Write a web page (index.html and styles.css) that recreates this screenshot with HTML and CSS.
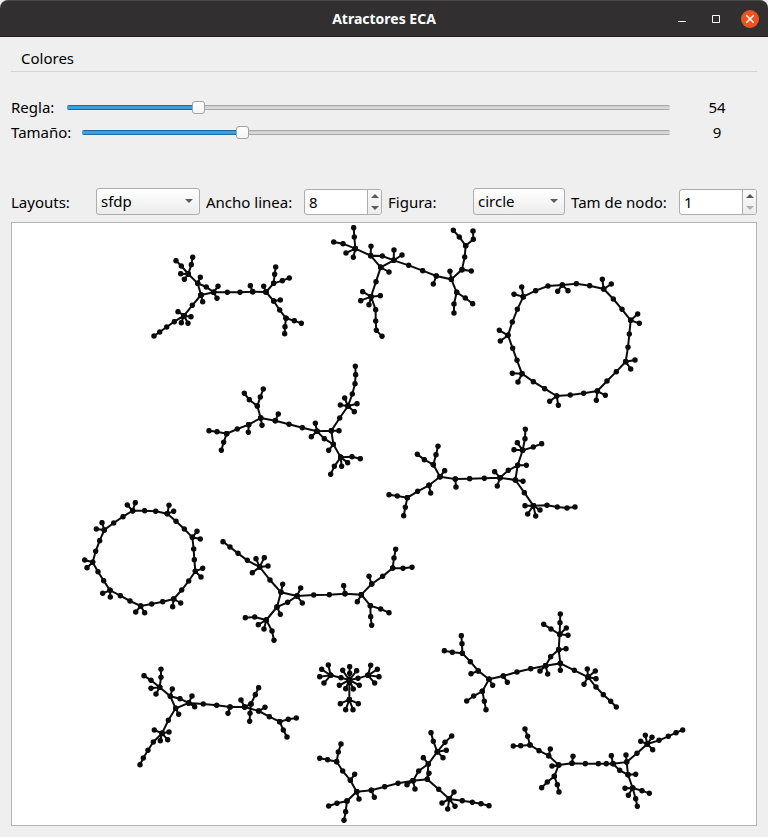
FILE: index.html
```html
<!DOCTYPE html>
<html lang="es">
<head>
<meta charset="utf-8">
<meta name="viewport" content="width=device-width, initial-scale=1">
<title>Atractores ECA</title>
<link rel="stylesheet" href="styles.css">
</head>
<body>
<header class="titlebar">
  <h1 class="title">Atractores ECA</h1>
  <div class="window-buttons">
    <button class="win-btn" type="button" aria-label="Minimizar"><svg width="18" height="18" viewBox="0 0 18 18"><path d="M5 11.5h8" stroke="#fff" fill="none"/></svg></button>
    <button class="win-btn" type="button" aria-label="Maximizar"><svg width="18" height="18" viewBox="0 0 18 18"><path d="M5.5 5.5h7v7h-7z" stroke="#fff" fill="none"/></svg></button>
    <button class="win-btn win-close" type="button" aria-label="Cerrar"><svg width="18" height="18" viewBox="0 0 18 18"><path d="M5.3 5.3l7.4 7.4M12.7 5.3l-7.4 7.4" stroke="#fff" stroke-width="1.5" fill="none"/></svg></button>
  </div>
</header>
<main class="content">
  <nav class="menubar"><button class="menu-item" type="button">Colores</button></nav>

  <section class="sliders">
    <div class="slider-row">
      <label class="slider-label" for="regla">Regla:</label>
      <input class="slider" id="regla" type="range" min="0" max="255" value="54" style="--fill:21.2%">
      <output class="slider-value" for="regla">54</output>
    </div>
    <div class="slider-row">
      <label class="slider-label" for="tamano">Tamaño:</label>
      <input class="slider" id="tamano" type="range" min="5" max="20" value="9" style="--fill:26.7%">
      <output class="slider-value" for="tamano">9</output>
    </div>
  </section>

  <section class="options">
    <label for="layout">Layouts:</label>
    <div class="combo"><select id="layout"><option>sfdp</option></select></div>
    <label for="ancho">Ancho linea:</label>
    <div class="spin">
      <input id="ancho" type="number" min="1" value="8">
      <div class="spin-buttons">
        <button class="up" type="button" aria-label="Aumentar ancho"></button>
        <button class="down" type="button" aria-label="Reducir ancho"></button>
      </div>
    </div>
    <label for="figura">Figura:</label>
    <div class="combo"><select id="figura"><option>circle</option></select></div>
    <label for="nodo">Tam de nodo:</label>
    <div class="spin">
      <input id="nodo" type="number" min="1" value="1">
      <div class="spin-buttons">
        <button class="up" type="button" aria-label="Aumentar nodo"></button>
        <button class="down" type="button" aria-label="Reducir nodo" disabled></button>
      </div>
    </div>
  </section>

  <section class="canvas">
    <svg class="graph" viewBox="12 223 744 602" role="img" aria-label="Atractores">
      <defs>
        <marker id="node" markerUnits="userSpaceOnUse" markerWidth="18" markerHeight="18" refX="9" refY="9"><circle cx="9" cy="9" r="8.2" fill="#0b0b0b"/></marker>
      </defs>
      <g transform="translate(140 225) scale(.333333)"><path d="M183 210L173 175L199 186L221 202L183 210L188 230M181 157L173 175L145 147L124 123L108 107M145 147L154 119L158 97M122 146L145 147L133 163M183 210L157 241L132 272L103 290L80 306L59 321L42 333M114 260L132 272L153 275M124 293L132 272L144 295M234 184L221 202L231 220M221 202L262 202L300 202L338 200L378 201L371 184M338 200L331 182M378 201L401 175L404 148L407 126M401 175L427 167L448 159M378 201L401 228L421 225M401 228L419 255L438 280L435 305L434 326M438 280L463 287L484 295"/></g>
      <g transform="translate(320 220) scale(.333333)"><path d="M182 142L152 107L187 108L221 121L182 142L207 156M153 79L152 107L106 86L103 51L101 23M106 86L69 71L41 66M78 99L106 86L100 112M182 142L168 185L153 230L167 269L167 303L169 331L186 349M128 215L153 230L181 227M122 242L153 230L147 254M222 90L221 121L246 105M221 121L266 136L308 152L349 168L394 178L390 154M349 168L340 192M394 178L426 149L454 153M426 149L434 111L437 77L418 51L400 31M437 77L460 58L459 33M394 178L410 217L402 252L402 279M410 217L436 234L458 251"/></g>
      <g transform="translate(490 270) scale(.333333)"><path d="M100 80L137 62L174 48L217 45L259 41L299 47L341 57L370 87L396 118L422 151L418 192L414 232L407 275L379 305L351 333L322 363L281 370L241 375L200 378L164 356L130 335L96 311L81 271L68 235L54 196L67 156L82 118ZM95 51L100 80L72 73M203 64L217 45L234 62M337 28L341 57L364 42M443 132L422 151L448 160M435 270L407 275L422 297M346 376L322 363L319 391M179 394L200 378L205 406M67 310L96 311L84 336M28 181L54 196L31 213"/></g>
      <g transform="translate(200 355) scale(.333333)"><path d="M186 211L182 189L172 153L148 134L133 115M172 153L181 126L190 102M182 189L146 209L145 232M146 209L112 222L80 236L51 230L27 227M80 236L71 262L64 286M182 189L226 197L267 208L307 218L351 229L394 227L400 268L373 251L351 229M226 197L235 177M346 205L351 229L334 245M417 227L394 227L419 189L444 153L457 117L465 86L467 59L466 34M434 129L444 153L421 150M471 146L444 153L463 170M386 286L400 268L422 307L456 305L481 311M425 334L422 307L443 323M422 307L403 334L392 358"/></g>
      <g transform="translate(380 420) scale(.333333)"><path d="M194 152L180 170L160 134L133 119L112 103M160 134L168 104L174 79M180 170L147 196L152 219M147 196L113 214L82 233L52 228L27 224M82 233L76 262L71 287M180 170L226 177L228 201M226 177L269 176L313 175L360 173L406 180L413 136L385 151L360 173M344 155L360 173L352 198M439 136L413 136L428 91L435 56L436 28M428 91L460 81L485 71M402 89L428 91L412 68M429 184L406 180L433 218L460 257L501 256L532 261L561 264L585 261M435 257L460 257L443 282M467 288L460 257L480 270"/></g>
      <g transform="translate(75 490) scale(.333333)"><path d="M173 62L209 62L242 64L277 71L303 94L328 117L352 142L356 177L358 209L361 244L341 273L320 300L296 327L263 335L230 342L197 348L165 333L136 317L105 301L86 272L69 245L53 217L62 184L74 152L88 120L116 99L144 80ZM157 45L173 62L181 38M282 46L277 71L296 64M366 124L352 142L376 147M383 235L361 244L378 261M317 339L296 327L293 350M182 366L197 348L209 368M83 310L105 301L106 321M29 210L53 217L36 233M64 117L88 120L81 98"/></g>
      <g transform="translate(210 530) scale(.333333)"><path d="M218 163L213 187L201 231L233 217L261 198L213 187L180 150L149 111L112 91L84 70L60 51L39 35M138 86L149 111L163 83M174 108L149 111L127 128M211 253L201 231L169 270L134 261L106 263M169 270L186 303L192 331M145 284L169 270L162 297M272 174L261 198L277 219M261 198L311 195L358 194L405 191L454 194L442 215M405 191L401 167M454 194L485 162L477 139M485 162L518 139L548 114L552 84L557 58M548 114L579 115L606 112M454 194L481 227L512 237L537 248M481 227L482 260L485 286"/></g>
      <g transform="translate(130 650) scale(.333333)">
        <path d="M127 117L121 139L137 175L176 159L150 146L121 139L89 112L63 91L42 77M89 112L93 82L93 58M63 115L89 112L78 132M146 193L137 175L115 211L96 250L70 276L54 301L40 324L30 344M73 240L96 250L117 246M91 272L96 250L113 269M186 138L176 159L194 170M176 159L220 162L260 166L300 171L344 171L333 150M300 171L294 190M344 171L363 162L376 134L386 113M363 162L360 190L359 214M344 171L386 183L405 172M386 183L418 200L449 215L475 208L499 204M449 215L460 240L471 261"/>
        <path d="M659 50L659 70L658 90L658 149M638 61L658 90L680 62M628 106L658 90L688 106M647 116L658 90L670 117M602 76L633 83L658 90L684 85L714 76M575 58L602 76L595 45M569 80L602 76L582 99M722 46L714 76L742 58M747 80L714 76L734 99M631 161L658 149L685 161M647 179L658 149L669 179"/>
      </g>
      <g transform="translate(430 605) scale(.333333)"><path d="M188 241L177 223L157 259L131 273L110 288M157 259L163 289L168 314M177 223L145 198L123 206M145 198L121 170L97 145L67 142L43 137M97 145L96 116L94 92M177 223L220 213L232 232M220 213L261 201L302 191L347 182L391 175L386 134L362 155L347 182M330 198L347 182L353 207M408 131L386 134L389 88L390 53L391 27M389 88L363 72L341 58M409 69L389 88L414 91M391 196L391 175L433 196L474 216L498 246L520 269L542 289L559 306M472 192L474 216L496 198M498 221L474 216L462 238"/></g>
      <g transform="translate(310 720) scale(.333333)">
        <path d="M147 237L140 215L111 243L81 250L56 258M111 243L107 275L102 301M140 215L121 181L134 163M121 181L98 153L80 125L53 119L29 115M80 125L85 96L93 72M140 215L184 211L193 232M184 211L224 200L264 190L309 182L352 178L355 132L326 153L309 182M291 194L309 182L315 207M340 113L355 132L382 95L370 64L363 38M382 95L405 67L425 48M409 91L382 95L399 113M357 160L352 178L386 208L418 237L457 242L487 247L513 251L537 257M432 216L418 237L396 249M413 267L418 237L435 259"/>
        <path d="M726 138L746 135L716 107L721 87M716 107L687 92L660 75L632 77L610 78M660 75L653 49L645 27M746 135L733 169L712 186L695 203M733 169L742 194L747 216M746 135L786 130L789 109M786 130L826 131L865 131L889 131L909 131L950 126L954 164L929 151L909 131L904 107M948 105L950 126L981 100L1012 72L1047 61L1075 49L1098 38L1118 30M992 64L1012 72L1006 46M1026 52L1012 72L1028 89M977 163L954 164L968 204L996 212L1018 220M968 204L977 236L982 259M945 205L968 204L955 226"/>
      </g>
    </svg>
  </section>
</main>
</body>
</html>
```
FILE: styles.css
```css
* {
  box-sizing: border-box;
}

body {
  margin: 0;
  background: #efefef;
  color: #000;
  font: 15px/20px "Noto Sans", "Open Sans", sans-serif;
}

button,
input,
select {
  margin: 0;
  padding: 0;
  border: 0;
  color: inherit;
  font: inherit;
}

.titlebar {
  display: grid;
  grid-template-columns: 1fr auto 1fr;
  align-items: center;
  height: 37px;
  padding: 0 9px;
  border-top: 1px solid #4b494a;
  border-bottom: 1px solid #1c1b1b;
  border-radius: 8px 8px 0 0;
  background: #322f30;
}

.title {
  grid-column: 2;
  margin: 0;
  color: #fff;
  font-size: 14px;
  font-weight: 700;
}

.window-buttons {
  display: flex;
  justify-content: flex-end;
  gap: 16px;
}

.win-btn {
  width: 18px;
  height: 18px;
  border-radius: 50%;
  background: none;
}

.win-btn svg {
  display: block;
}

.win-close {
  background: #e95420;
}

.content {
  padding: 10px 11px 11px;
}

.menubar {
  display: flex;
  padding: 0 10px;
  border-bottom: 1px solid #d3d3d3;
}

.menu-item {
  height: 24px;
  padding-bottom: 2px;
  background: none;
}

.sliders {
  margin-top: 23px;
}

.slider-row {
  display: flex;
  align-items: center;
  height: 25px;
}

.slider-label,
.slider-value {
  padding-bottom: 2px;
}

.slider-label {
  min-width: 45px;
  margin-right: 11px;
}

.slider {
  flex: 1;
  min-width: 0;
  height: 13px;
  appearance: none;
  background: none;
}

.slider::-webkit-slider-runnable-track {
  height: 5px;
  border-radius: 2px;
  background:
    linear-gradient(#1f6a9c 1px, #3a9fe0 1px, #3a9fe0 4px, #1f6a9c 4px) 0 0 / var(--fill) 100% no-repeat,
    linear-gradient(#a6a6a6 1px, #cdcdcd 1px, #dedede 4px, #a6a6a6 4px);
}

.slider::-webkit-slider-thumb {
  width: 13px;
  height: 13px;
  margin-top: -4px;
  border: 1px solid #a3a3a3;
  border-radius: 3px;
  appearance: none;
  background: linear-gradient(#fff, #f4f4f4);
}

.slider-value {
  width: 80px;
  margin-left: 7px;
  text-align: center;
}

.options {
  display: grid;
  grid-template-columns: 79fr 104fr 92fr 78fr 79fr 92fr 102fr 78fr;
  align-items: center;
  gap: 6px;
  margin-top: 43px;
  white-space: nowrap;
}

.combo {
  position: relative;
  height: 27px;
}

.combo select {
  width: 100%;
  height: 100%;
  padding: 0 20px 2px 4px;
  border: 1px solid #adadad;
  border-radius: 3px;
  appearance: none;
  background: linear-gradient(#fff, #ececec);
}

.combo::after {
  position: absolute;
  top: 11px;
  right: 7px;
  border: 4px solid transparent;
  border-top-color: #5a5a5a;
  border-bottom: 0;
  content: "";
  pointer-events: none;
}

.spin {
  display: flex;
  align-self: end;
  height: 26px;
  overflow: hidden;
  border: 1px solid #adadad;
  border-radius: 3px;
  background: #fff;
}

.spin input {
  flex: 1;
  min-width: 0;
  padding-left: 4px;
  appearance: textfield;
  background: none;
}

.spin input::-webkit-inner-spin-button {
  appearance: none;
}

.spin-buttons {
  display: flex;
  flex-direction: column;
  width: 14px;
  border-left: 1px solid #adadad;
  background: linear-gradient(#fafafa, #ececec);
}

.spin-buttons button {
  display: flex;
  flex: 1;
  align-items: center;
  justify-content: center;
  background: none;
}

.spin-buttons button::before {
  border: 4px solid transparent;
  content: "";
}

.spin-buttons .up::before {
  border-top: 0;
  border-bottom-color: #5a5a5a;
}

.spin-buttons .down::before {
  border-top-color: #5a5a5a;
  border-bottom: 0;
}

.spin-buttons .down:disabled::before {
  border-top-color: #b0b0b0;
}

.canvas {
  margin-top: 7px;
  border: 1px solid #b4b4b4;
  background: #fff;
}

.graph {
  display: block;
  width: 100%;
}

.graph path {
  fill: none;
  stroke: #0b0b0b;
  stroke-width: 6px;
  marker: url(#node);
}
```
